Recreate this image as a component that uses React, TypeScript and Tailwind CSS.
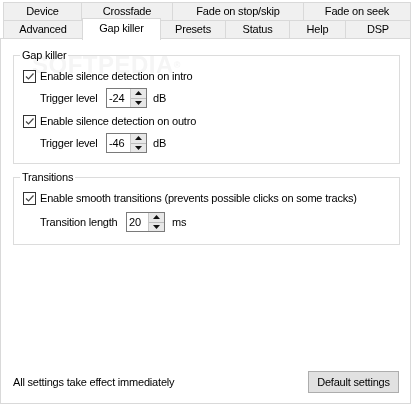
import React from 'react';

const row1 = [
  { label: 'Device', w: 'w-[79px]' },
  { label: 'Crossfade', w: 'w-[92px]' },
  { label: 'Fade on stop/skip', w: 'w-[132px]' },
  { label: 'Fade on seek', w: 'w-[108px]' },
];

const row2 = [
  { label: 'Advanced', w: 'w-[80px]' },
  { label: 'Gap killer', w: 'w-[79px]', active: true },
  { label: 'Presets', w: 'w-[66px]' },
  { label: 'Status', w: 'w-[65px]' },
  { label: 'Help', w: 'w-[57px]' },
  { label: 'DSP', w: 'w-[66px]' },
];

const Check = () => (
  <div className="w-[13px] h-[13px] border border-[#333] bg-white flex items-center justify-center shrink-0">
    <svg width="11" height="11" viewBox="0 0 11 11">
      <path d="M2 5.5 L4.5 8 L9.5 2.5" fill="none" stroke="#444" strokeWidth="1.2" />
    </svg>
  </div>
);

const Spin = ({ value, w }: { value: string; w: string }) => (
  <div className={`${w} h-[20px] border border-[#7a7a7a] bg-white flex`}>
    <div className="flex-1 pl-[2px] flex items-center">{value}</div>
    <div className="w-[16px] flex flex-col border-l border-[#c8c8c8] bg-[#e8e8e8]">
      <div className="flex-1 flex items-center justify-center border-b border-[#bcbcbc]">
        <svg width="7" height="4" viewBox="0 0 7 4"><path d="M0 4 L3.5 0 L7 4 Z" fill="#111" /></svg>
      </div>
      <div className="flex-1 flex items-center justify-center">
        <svg width="7" height="4" viewBox="0 0 7 4"><path d="M0 0 L3.5 4 L7 0 Z" fill="#111" /></svg>
      </div>
    </div>
  </div>
);

const Group = ({ title, h, children }: { title: string; h: string; children: React.ReactNode }) => (
  <div className={`relative ml-[12px] w-[387px] ${h} border border-[#dcdcdc]`}>
    <span className="absolute -top-[8px] left-[6px] bg-white px-[2px] leading-[14px]">{title}</span>
    {children}
  </div>
);

export default function App() {
  return (
    <div className="w-[414px] h-[405px] bg-white text-[11px] tracking-[-0.2px] text-black font-['Liberation_Sans',Arial,sans-serif] relative overflow-hidden">
      {/* tab rows */}
      <div className="flex ml-[3px] mt-[2px] h-[19px]">
        {row1.map((t, i) => (
          <div
            key={t.label}
            className={`${t.w} ${i > 0 ? '-ml-px' : ''} border border-[#d9d9d9] bg-[#f0f0f0] flex items-center justify-center`}
          >
            {t.label}
          </div>
        ))}
      </div>
      <div className="flex items-end ml-[3px] -mt-px h-[19px] relative z-10">
        {row2.map((t, i) => (
          <div
            key={t.label}
            className={`${t.w} ${i > 0 ? '-ml-px' : ''} ${
              t.active
                ? 'h-[22px] -mb-px border border-b-0 border-[#d9d9d9] bg-white pb-[3px] relative z-10'
                : 'h-[19px] border border-[#d9d9d9] bg-[#f0f0f0]'
            } flex items-center justify-center`}
          >
            {t.label}
          </div>
        ))}
      </div>

      {/* tab panel */}
      <div className="-mt-px w-[411px] h-[366px] border border-[#d9d9d9] bg-white flex flex-col pt-[16px]">
        <Group title="Gap killer" h="h-[109px]">
          <div className="flex items-center gap-[4px] ml-[9px] mt-[14px] h-[13px]">
            <Check />
            <span>Enable silence detection on intro</span>
          </div>
          <div className="flex items-center ml-[26px] mt-[5px]">
            <span className="w-[66px]">Trigger level</span>
            <Spin value="-24" w="w-[41px]" />
            <span className="ml-[6px]">dB</span>
          </div>
          <div className="flex items-center gap-[4px] ml-[9px] mt-[7px] h-[13px]">
            <Check />
            <span>Enable silence detection on outro</span>
          </div>
          <div className="flex items-center ml-[26px] mt-[5px]">
            <span className="w-[66px]">Trigger level</span>
            <Spin value="-46" w="w-[41px]" />
            <span className="ml-[6px]">dB</span>
          </div>
        </Group>

        <div className="mt-[13px]">
          <Group title="Transitions" h="h-[68px]">
            <div className="flex items-center gap-[4px] ml-[9px] mt-[14px] h-[13px]">
              <Check />
              <span>Enable smooth transitions (prevents possible clicks on some tracks)</span>
            </div>
            <div className="flex items-center ml-[26px] mt-[7px]">
              <span className="w-[86px]">Transition length</span>
              <Spin value="20" w="w-[39px]" />
              <span className="ml-[7px]">ms</span>
            </div>
          </Group>
        </div>

        <div className="mt-auto mb-[10px] flex items-center justify-between pl-[12px] pr-[11px]">
          <span>All settings take effect immediately</span>
          <button className="w-[91px] h-[22px] border border-[#adadad] bg-[#e1e1e1]">Default settings</button>
        </div>
      </div>

      {/* watermark */}
      <div className="absolute left-[32px] top-[51px] text-[24px] leading-[28px] font-bold tracking-[0.5px] text-[#f5f5f5] mix-blend-multiply pointer-events-none select-none">
        SOFTPEDIA<span className="text-[9px] align-top">®</span>
      </div>
    </div>
  );
}
